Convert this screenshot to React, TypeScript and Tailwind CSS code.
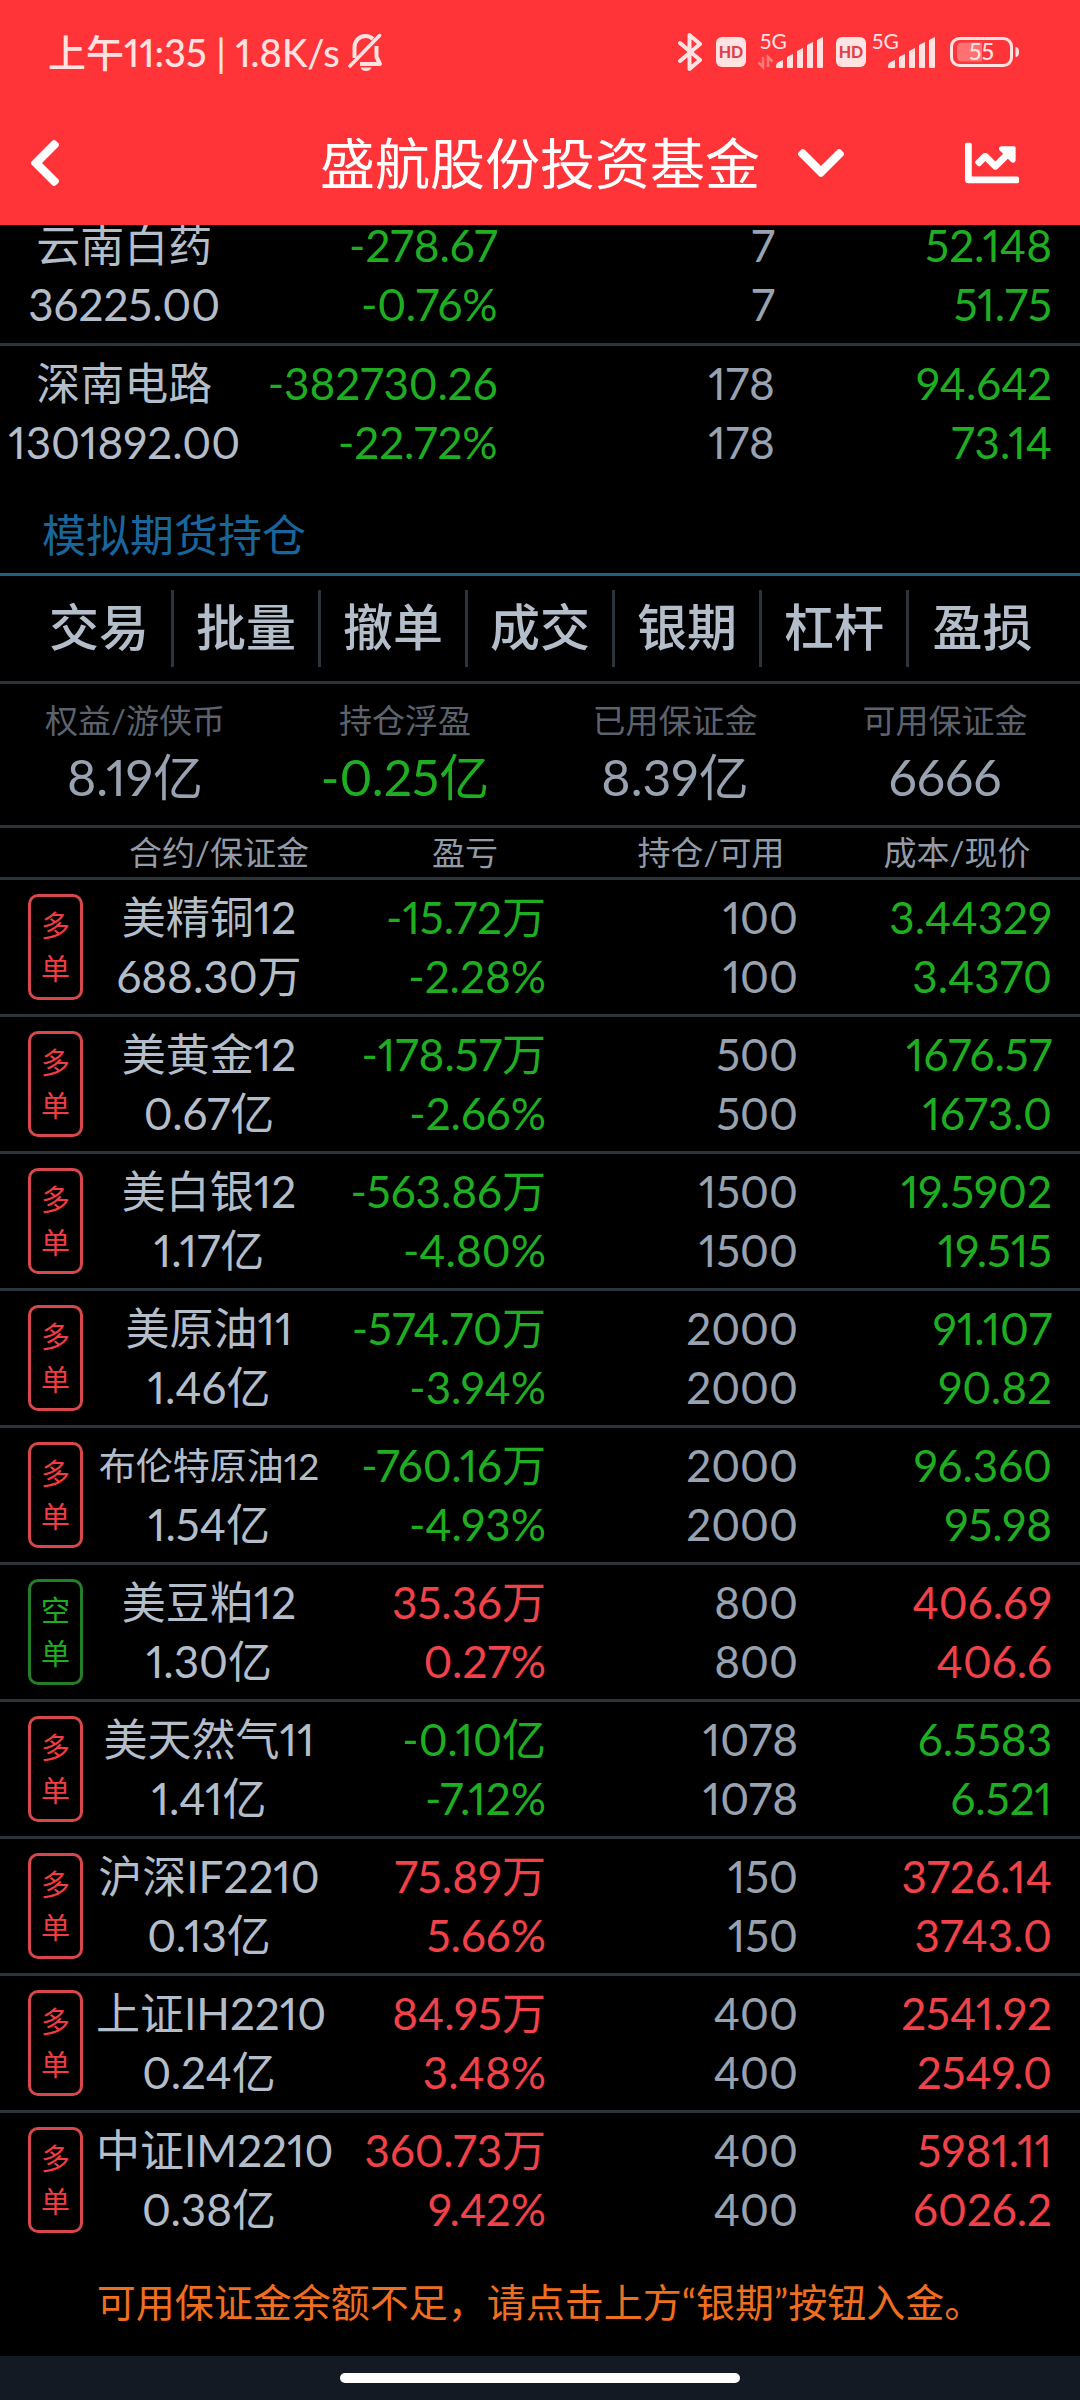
import React from 'react'
import { FaChartLine, FaChevronDown, FaChevronLeft } from 'react-icons/fa'
import { clsx } from 'clsx'

type Trend = 'up' | 'down'

interface StockPosition {
  name: string;
  value: string;
  profit: string;
  rate: string;
  held: string;
  available: string;
  cost: string;
  price: string;
  trend: Trend;
}

interface FuturesPosition extends StockPosition {
  side: 'long' | 'short';
  compact?: boolean;
}

const stocks: StockPosition[] = [
  { name: '云南白药', value: '36225.00', profit: '-278.67', rate: '-0.76%', held: '7', available: '7', cost: '52.148', price: '51.75', trend: 'down' },
  { name: '深南电路', value: '1301892.00', profit: '-382730.26', rate: '-22.72%', held: '178', available: '178', cost: '94.642', price: '73.14', trend: 'down' },
]

const futures: FuturesPosition[] = [
  { side: 'long', name: '美精铜12', value: '688.30万', profit: '-15.72万', rate: '-2.28%', held: '100', available: '100', cost: '3.44329', price: '3.4370', trend: 'down' },
  { side: 'long', name: '美黄金12', value: '0.67亿', profit: '-178.57万', rate: '-2.66%', held: '500', available: '500', cost: '1676.57', price: '1673.0', trend: 'down' },
  { side: 'long', name: '美白银12', value: '1.17亿', profit: '-563.86万', rate: '-4.80%', held: '1500', available: '1500', cost: '19.5902', price: '19.515', trend: 'down' },
  { side: 'long', name: '美原油11', value: '1.46亿', profit: '-574.70万', rate: '-3.94%', held: '2000', available: '2000', cost: '91.107', price: '90.82', trend: 'down' },
  { side: 'long', name: '布伦特原油12', compact: true, value: '1.54亿', profit: '-760.16万', rate: '-4.93%', held: '2000', available: '2000', cost: '96.360', price: '95.98', trend: 'down' },
  { side: 'short', name: '美豆粕12', value: '1.30亿', profit: '35.36万', rate: '0.27%', held: '800', available: '800', cost: '406.69', price: '406.6', trend: 'up' },
  { side: 'long', name: '美天然气11', value: '1.41亿', profit: '-0.10亿', rate: '-7.12%', held: '1078', available: '1078', cost: '6.5583', price: '6.521', trend: 'down' },
  { side: 'long', name: '沪深IF2210', value: '0.13亿', profit: '75.89万', rate: '5.66%', held: '150', available: '150', cost: '3726.14', price: '3743.0', trend: 'up' },
  { side: 'long', name: '上证IH2210', value: '0.24亿', profit: '84.95万', rate: '3.48%', held: '400', available: '400', cost: '2541.92', price: '2549.0', trend: 'up' },
  { side: 'long', name: '中证IM2210', value: '0.38亿', profit: '360.73万', rate: '9.42%', held: '400', available: '400', cost: '5981.11', price: '6026.2', trend: 'up' },
]

const actions = ['交易', '批量', '撤单', '成交', '银期', '杠杆', '盈损']

const summary = [
  { label: '权益/游侠币', value: '8.19亿' },
  { label: '持仓浮盈', value: '-0.25亿', trend: 'down' as const },
  { label: '已用保证金', value: '8.39亿' },
  { label: '可用保证金', value: '6666' },
]

const trendClass = (trend?: Trend) => {
  switch (trend) {
    case 'up':
      return 'text-[#f04248]'
    case 'down':
      return 'text-[#1fae22]'
    default:
      return 'text-[#98a2b1]'
  }
}

const BellOffIcon = () => (
  <svg viewBox="0 0 36 38" className="h-[38px] w-9" fill="none" stroke="currentColor" strokeWidth="4" aria-hidden="true">
    <path d="M6.500 25V14.500C6.500 8 11 3 17.500 3C20.500 3 23 4 25 6" />
    <path d="M28.500 13V24L32 31H12" strokeLinejoin="round" />
    <path d="M2 33L31.500 2.500" strokeLinecap="round" strokeWidth="3.500" />
    <path d="M12.500 34.500H23.500C22.500 37 20.500 38 18 38C15.500 38 13.500 37 12.500 34.500Z" fill="currentColor" stroke="none" />
  </svg>
)

const BluetoothIcon = () => (
  <svg viewBox="0 0 24 40" className="h-10 w-6" fill="none" stroke="currentColor" strokeWidth="4" strokeLinejoin="round" strokeLinecap="round" aria-hidden="true">
    <path d="M2 11L22 28L11.500 37V3L22 12L2 29" />
  </svg>
)

const HdIcon = () => (
  <svg viewBox="0 0 30 30" className="size-[30px]" aria-hidden="true">
    <rect width="30" height="30" rx="6" fill="currentColor" />
    <text x="15" y="20.500" textAnchor="middle" fontSize="16" fontWeight="900" fill="#dc4347">HD</text>
  </svg>
)

const SignalIcon = ({ transfer }: { transfer?: boolean }) => (
  <svg viewBox="0 0 66 38" className="h-[38px] w-[66px] overflow-visible" fill="currentColor" aria-hidden="true">
    <text x="2" y="16" fontSize="21">5G</text>
    {transfer && (
      <g opacity="0.4" fill="none" stroke="currentColor" strokeWidth="2.500">
        <path d="M5 24V34L0.500 29.500" />
        <path d="M10 34V24L14.500 28.500" />
      </g>
    )}
    <path d="M18 34C18 30 20 29 25 27V34Q25 35 24 35H19Q18 35 18 34Z" />
    <path d="M29 24L35 21V34Q35 35 34 35H30Q29 35 29 34Z" />
    <path d="M39 18L45 15V34Q45 35 44 35H40Q39 35 39 34Z" />
    <path d="M49 12L55 9V34Q55 35 54 35H50Q49 35 49 34Z" />
    <path d="M59 7L65 4V34Q65 35 64 35H60Q59 35 59 34Z" />
  </svg>
)

const BatteryIcon = () => (
  <svg viewBox="0 0 70 30" className="h-[30px] w-[70px]" aria-hidden="true">
    <rect x="1.500" y="1.500" width="60" height="27" rx="8" fill="none" stroke="currentColor" strokeWidth="3" />
    <path d="M12 5.500H32V24.500H12Q7 24.500 7 19.500V10.500Q7 5.500 12 5.500Z" fill="#ff7071" />
    <path d="M65.500 10Q69 10 69 15T65.500 20Z" fill="currentColor" />
    <text x="31.500" y="23" textAnchor="middle" fontSize="23" fontWeight="500" fill="currentColor">55</text>
  </svg>
)

const StatusBar = () => (
  <div className="flex h-[104px] items-center justify-between pl-12 pr-[60px] text-[#ffe2e2]">
    <div className="flex items-center gap-2 text-[38px] font-medium">
      <span>上午11:35 | 1.8K/s</span>
      <BellOffIcon />
    </div>
    <div className="flex items-center">
      <BluetoothIcon />
      <span className="ml-3.5"><HdIcon /></span>
      <span className="ml-3"><SignalIcon transfer /></span>
      <span className="ml-3"><HdIcon /></span>
      <span className="ml-1"><SignalIcon /></span>
      <span className="ml-3.5"><BatteryIcon /></span>
    </div>
  </div>
)

const SideBadge = ({ side }: { side: FuturesPosition['side'] }) => (
  <div
    className={clsx(
      'ml-7 flex h-[106px] w-[55px] flex-col items-center justify-center rounded-[10px] border-[3px] text-[29px] leading-[43px]',
      side === 'long' ? 'border-[#d8474b] text-[#f03c42]' : 'border-[#237f28] text-[#1fae22]',
    )}
  >
    <span>{side === 'long' ? '多' : '空'}</span>
    <span>单</span>
  </div>
)

const PriceCells = ({ row, profitClass, heldClass }: { row: StockPosition; profitClass: string; heldClass: string }) => (
  <>
    <td className={clsx('text-right', profitClass, trendClass(row.trend))}>
      <div>{row.profit}</div>
      <div>{row.rate}</div>
    </td>
    <td className={clsx('text-right text-[#98a2b1]', heldClass)}>
      <div>{row.held}</div>
      <div>{row.available}</div>
    </td>
    <td className={clsx('pr-7 text-right', trendClass(row.trend))}>
      <div>{row.cost}</div>
      <div>{row.price}</div>
    </td>
  </>
)

export default function App() {
  return (
    <div className="flex min-h-screen flex-col bg-black font-['Lato','Noto_Sans_CJK_SC',sans-serif] text-[#b4bdca] proportional-nums">
      <header className="bg-[#ff3438] pb-[3px]">
        <StatusBar />
        <div className="grid h-[118px] grid-cols-[1fr_auto_1fr] items-center text-[54px] text-white">
          <button type="button" aria-label="返回" className="justify-self-start pl-[18px]">
            <FaChevronLeft />
          </button>
          <h1 className="text-[55px] leading-none">盛航股份投资基金</h1>
          <div className="flex items-center justify-between pl-[34px] pr-[61px]">
            <button type="button" aria-label="切换组合">
              <FaChevronDown />
            </button>
            <button type="button" aria-label="收益走势">
              <FaChartLine />
            </button>
          </div>
        </div>
      </header>

      <main className="grow overflow-hidden">
        {/* list is scrolled, first row sits partly under the header */}
        <table className="-mt-[18px] w-full table-fixed text-[44px] leading-[59px]">
          <colgroup>
            <col className="w-[23%]" />
            <col />
            <col />
            <col />
          </colgroup>
          <tbody>
            {stocks.map((row) => (
              <tr key={row.name} className="h-[137px] border-b-[3px] border-[#2b343b] last:border-b-0">
                <td className="text-center">
                  <div>{row.name}</div>
                  <div>{row.value}</div>
                </td>
                <PriceCells row={row} profitClass="pr-7" heldClass="pr-7" />
              </tr>
            ))}
          </tbody>
        </table>

        <h2 className="border-b-[3px] border-[#255f80] pt-4 pl-[42px] text-[44px] leading-[76px] text-[#19669c]">模拟期货持仓</h2>

        <nav className="grid grid-cols-7 border-b-[3px] border-[#2b343b] pt-3.5 pr-6 pb-3.5 pl-[27px]">
          {actions.map((action) => (
            <button
              key={action}
              type="button"
              className="h-[77px] border-r-[3px] border-[#2b343b] pb-1 text-[50px] leading-none font-medium last:border-r-0"
            >
              {action}
            </button>
          ))}
        </nav>

        <dl className="grid grid-cols-4 border-b-[3px] border-[#2b343b] pt-3.5 pb-3.5 text-center">
          {summary.map((item) => (
            <div key={item.label}>
              <dt className="text-[33px] leading-[45px] text-[#5c636e]">{item.label}</dt>
              <dd className={clsx('text-[50px] leading-[68px]', trendClass(item.trend))}>{item.value}</dd>
            </div>
          ))}
        </dl>

        <table className="w-full table-fixed text-[44px] leading-[59px]">
          <colgroup>
            <col className="w-24" />
            <col />
            <col />
            <col />
            <col />
          </colgroup>
          <thead>
            <tr className="h-[50px] border-b-[3px] border-[#2b343b] text-[33px] leading-[47px] text-[#929ba7]">
              <th aria-label="方向" />
              <th className="font-normal">合约/保证金</th>
              <th className="font-normal">盈亏</th>
              <th className="font-normal">持仓/可用</th>
              <th className="font-normal">成本/现价</th>
            </tr>
          </thead>
          <tbody>
            {futures.map((row) => (
              <tr key={row.name} className="h-[137px] border-b-[3px] border-[#2b343b] last:border-b-0">
                <td>
                  <SideBadge side={row.side} />
                </td>
                <td className="pr-5 text-center whitespace-nowrap">
                  <div className={clsx(row.compact && 'text-[37px]')}>{row.name}</div>
                  <div>{row.value}</div>
                </td>
                <PriceCells row={row} profitClass="pr-[42px]" heldClass="pr-9" />
              </tr>
            ))}
          </tbody>
        </table>

        <p className="text-center text-[39px] leading-[108px] text-[#ee6f1f]">可用保证金余额不足，请点击上方“银期”按钮入金。</p>
      </main>

      <footer className="flex h-11 items-center justify-center bg-[#131a24]">
        <div className="h-2.5 w-[400px] rounded-full bg-white" />
      </footer>
    </div>
  )
}
